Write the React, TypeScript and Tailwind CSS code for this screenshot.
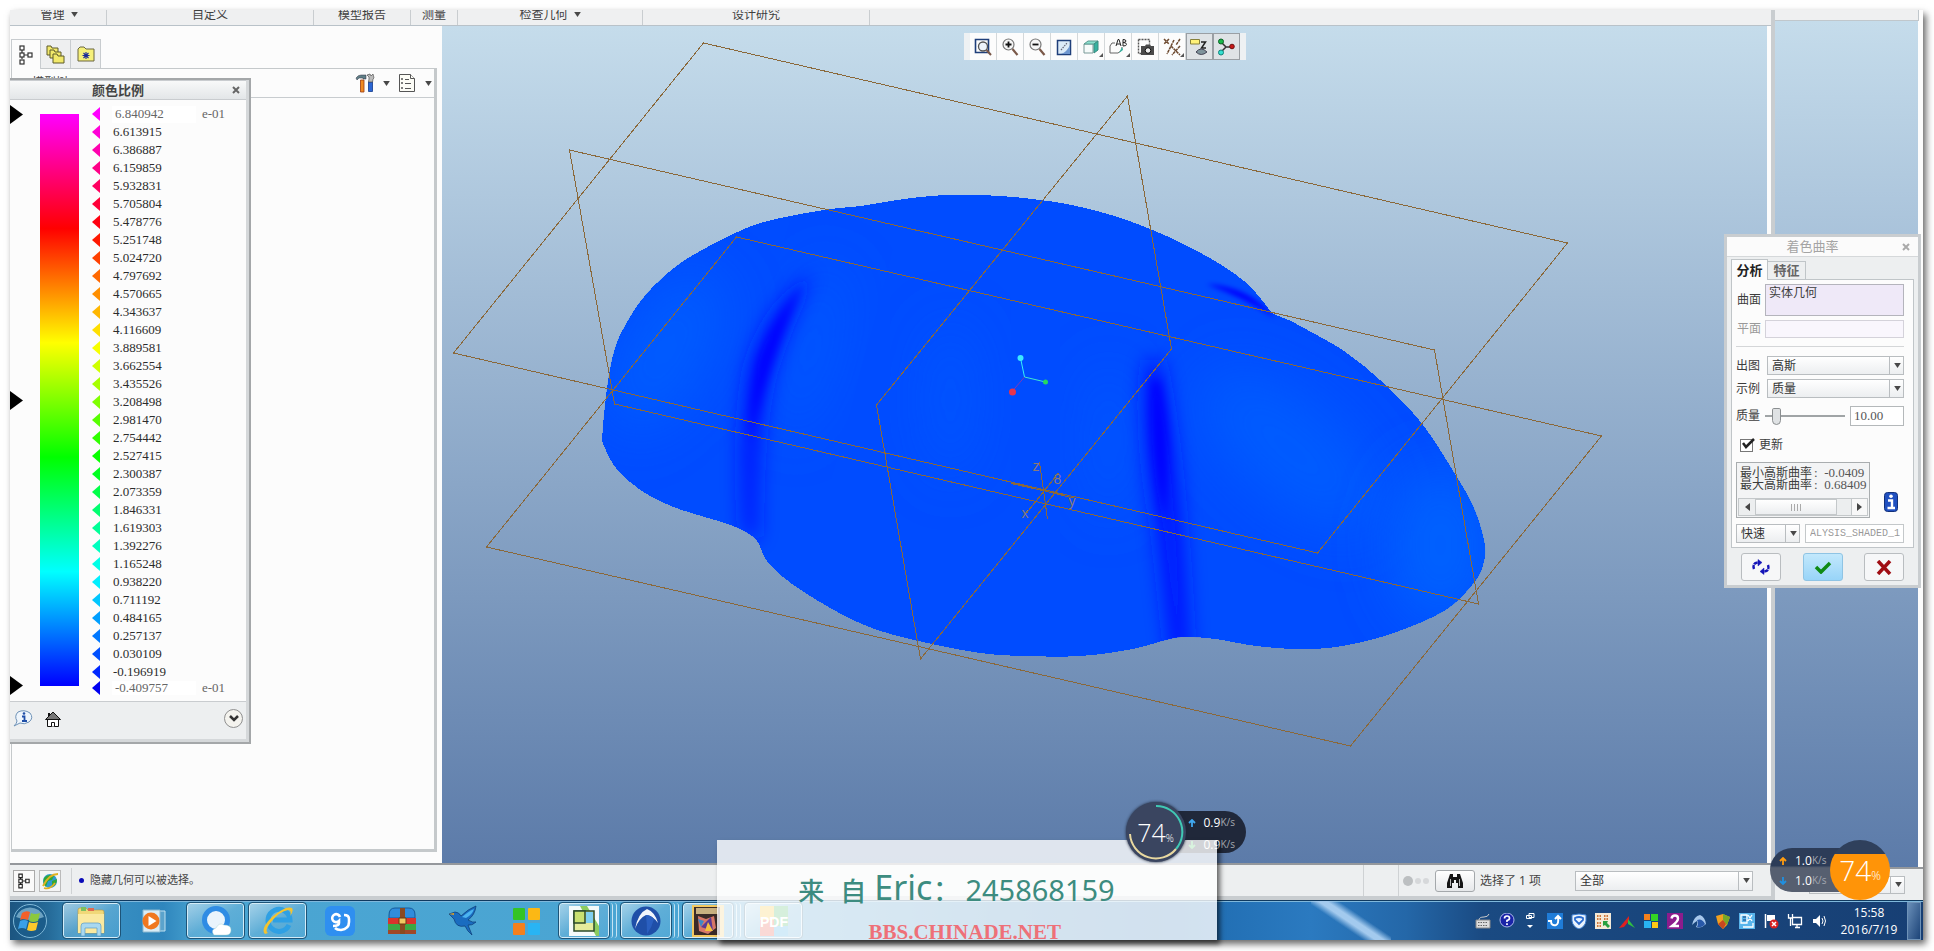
import type { ReactNode } from "react";

const cjk = "font-['Noto_Sans','Noto_Sans_CJK_SC',sans-serif]";
const song = "font-['Liberation_Serif','Noto_Sans_CJK_SC',serif]";

type Pt = [number, number];

/* Closed Catmull-Rom spline through the given points. */
function spline(pts: Pt[]): string {
  const n = pts.length;
  let d = `M${pts[0][0]} ${pts[0][1]}`;
  for (let i = 0; i < n; i++) {
    const p0 = pts[(i - 1 + n) % n];
    const p1 = pts[i];
    const p2 = pts[(i + 1) % n];
    const p3 = pts[(i + 2) % n];
    d += `C${p1[0] + (p2[0] - p0[0]) / 6} ${p1[1] + (p2[1] - p0[1]) / 6} ${p2[0] - (p3[0] - p1[0]) / 6} ${p2[1] - (p3[1] - p1[1]) / 6} ${p2[0]} ${p2[1]}`;
  }
  return d + "Z";
}

const body: Pt[] = [
  [602, 433], [607, 385], [614, 350], [625, 325], [645, 295], [676, 266], [707, 247], [737, 232], [767, 221],
  [823, 210], [860, 206], [897, 200], [930, 196], [960, 195], [1000, 196], [1040, 200], [1071, 205], [1114, 216],
  [1152, 230], [1187, 246], [1221, 265], [1246, 283], [1263, 302], [1272, 313], [1288, 320], [1307, 330],
  [1345, 352], [1383, 383], [1421, 423], [1452, 470], [1473, 507], [1484, 543], [1483, 563], [1474, 582],
  [1445, 610], [1393, 633], [1342, 646], [1300, 649], [1256, 646], [1215, 639], [1187, 637], [1169, 639],
  [1132, 649], [1080, 656], [1024, 656], [980, 653], [927, 643], [877, 630], [837, 612], [793, 585], [767, 562],
  [758, 543], [747, 533], [727, 524], [673, 507], [640, 490], [617, 470], [604, 447],
];

const stops = ["#ff00ff", "#ff0000", "#ffff00", "#00ff00", "#00ffff", "#0000ff"];
const values = [
  "6.613915", "6.386887", "6.159859", "5.932831", "5.705804", "5.478776", "5.251748", "5.024720", "4.797692",
  "4.570665", "4.343637", "4.116609", "3.889581", "3.662554", "3.435526", "3.208498", "2.981470", "2.754442",
  "2.527415", "2.300387", "2.073359", "1.846331", "1.619303", "1.392276", "1.165248", "0.938220", "0.711192",
  "0.484165", "0.257137", "0.030109", "-0.196919",
];

function scaleColor(t: number): string {
  const s = Math.min(t * 5, 4.9999);
  const i = Math.floor(s);
  const f = s - i;
  const ch = (hex: string, k: number) => parseInt(hex.slice(1 + k * 2, 3 + k * 2), 16);
  const mix = [0, 1, 2].map((k) => Math.round(ch(stops[i], k) * (1 - f) + ch(stops[i + 1], k) * f));
  return `rgb(${mix.join(",")})`;
}

function Down({ className = "" }: { className?: string }) {
  return (
    <svg viewBox="0 0 8 6" className={`h-[5px] w-[7px] shrink-0 ${className}`}>
      <path d="M0 0h8L4 6z" fill="#484848" />
    </svg>
  );
}

function Marker({ color }: { color: string }) {
  return (
    <svg viewBox="0 0 8 14" className="h-[14px] w-2 shrink-0">
      <path d="M8 0v14L0 7z" fill={color} />
    </svg>
  );
}

function TreeIcon() {
  return (
    <svg viewBox="0 0 14 20" className="h-5 w-[14px]" fill="#fff" stroke="#333" strokeWidth="1.2">
      <path d="M3 5v9M5 10h4" />
      <rect x="1" y="1" width="4" height="4" />
      <rect x="1" y="8" width="4" height="4" />
      <rect x="1" y="15" width="4" height="4" />
      <rect x="9" y="8" width="4" height="4" />
    </svg>
  );
}

function Ribbon() {
  const cells: [string, string, boolean][] = [
    ["w-[95px]", "管理", true],
    ["w-[207px]", "自定义", false],
    ["w-[97px]", "模型报告", false],
    ["w-[47px]", "测量", false],
    ["w-[185px]", "检查几何", true],
    ["w-[227px]", "设计研究", false],
  ];
  return (
    <nav className="flex h-4 shrink-0 items-stretch overflow-hidden border-b border-[#b9c2c9] bg-[#eff0f1] pl-[2px] text-xs text-[#3f3f3f]">
      {cells.map(([w, label, menu]) => (
        <button key={label} className={`flex ${w} shrink-0 items-center justify-center gap-[6px] border-r border-[#c9cdd0] pb-[6px] leading-none`}>
          {label}
          {menu && <Down />}
        </button>
      ))}
    </nav>
  );
}

function ModelTreePanel() {
  return (
    <aside className="flex w-[432px] shrink-0 flex-col bg-[#fcfcfc] pt-[13px] pr-[5px] pb-[11px] pl-[1px]">
      <div className="flex">
        <button aria-label="模型树" className="z-10 -mb-[1px] flex h-[30px] w-[30px] items-center justify-center border border-b-0 border-[#c8cccf] bg-[#fcfcfc]">
          <TreeIcon />
        </button>
        <button aria-label="文件夹" className="flex h-[29px] w-[30px] items-center justify-center border-t border-r border-[#c8cccf] bg-[#eeeff0]">
          <svg viewBox="0 0 20 20" className="h-5 w-5" stroke="#5d5a2a" fill="#f2e96b">
            <path d="M1 2h4l1 2h6v7H1z" />
            <path d="M4 6h4l1 2h6v6H4z" />
            <path d="M7 10h4l1 2h6v7H7z" />
          </svg>
        </button>
        <button aria-label="收藏夹" className="flex h-[29px] w-[30px] items-center justify-center border-t border-r border-[#c8cccf] bg-[#eeeff0]">
          <svg viewBox="0 0 18 16" className="h-4 w-[18px]">
            <path d="M1 15V3l2-2h4l2 2h8v12z" fill="#f6f07a" stroke="#6a6740" />
            <path d="M9 6v7M5.500 9.500h7M6.500 7l5 5M11.500 7l-5 5" stroke="#1a2a9a" strokeWidth="1.100" />
          </svg>
        </button>
      </div>
      <div className="flex flex-1 flex-col border-t border-r-3 border-b-3 border-l border-[#c5c9cb]">
        <div className="flex h-[29px] items-center border-b border-[#c8cccf] pr-[2px]">
          <span className="flex-1 pl-5 text-xs text-[#444]">模型树</span>
          <button aria-label="设置" className="flex items-center gap-2">
            <svg viewBox="0 0 20 20" className="h-5 w-5">
              <path d="M1 5q2-3 5-3h5v4H8v-1H4l-2 2z" fill="#5f7f86" stroke="#334" strokeWidth=".5" />
              <path d="M5.500 7h3.500v12H5.500z" fill="#f08a20" stroke="#9a3a10" strokeWidth=".8" />
              <path d="M13.500 9h4v9.500h-4z" fill="#2c66d4" stroke="#123a8a" strokeWidth=".8" />
              <path d="M12 2l2 2v2l-.5 3h4l.5-3 1-1-1-4-2 2-1-2z" fill="#bbb" stroke="#555" strokeWidth=".7" />
            </svg>
            <Down />
          </button>
          <button aria-label="显示" className="ml-2 flex items-center gap-[9px]">
            <svg viewBox="0 0 18 20" className="h-5 w-[18px]" fill="#fcfcf6" stroke="#555">
              <path d="M1.500 1.500h11l4 4v13h-15z" />
              <path d="M12.500 1.500v4h4" />
              <path d="M7 6.500h4M7 10.500h6M7 15.500h6M3.500 5.500h1v1h-1zM3.500 9.500h1v1h-1zM3.500 14.500h1v1h-1z" />
            </svg>
            <Down />
          </button>
        </div>
      </div>
    </aside>
  );
}

function ToolButton({ label, active, children, more }: { label: string; active?: boolean; children: ReactNode; more?: boolean }) {
  const look = active ? "border border-[#9a9fa4] bg-[#dfe3e6]" : "border-r border-[#d4d8da] bg-[#fcfcfc]";
  return (
    <button aria-label={label} className={`relative flex h-[27px] w-[27px] items-center justify-center ${look}`}>
      <svg viewBox="0 0 18 18" className="h-[18px] w-[18px]" fill="none">
        {children}
      </svg>
      {more && (
        <svg viewBox="0 0 4 4" className="absolute right-[1px] bottom-[3px] h-1 w-1">
          <path d="M4 0v4H0z" fill="#555" />
        </svg>
      )}
    </button>
  );
}

function ViewToolbar() {
  return (
    <div className="absolute inset-x-0 top-[7px] flex justify-center">
      <div className="flex bg-[#eef1f3] px-[6px]">
        <ToolButton label="重新调整">
          <path d="M1.500 1.500h13v13h-13z" stroke="#1f3f7a" strokeWidth="1.600" />
          <circle cx="9" cy="8.500" r="4.500" fill="#eef4fb" stroke="#555" strokeWidth="1.300" />
          <path d="M12.500 12l4.500 5" stroke="#7a5848" strokeWidth="2" />
        </ToolButton>
        <ToolButton label="放大">
          <circle cx="7.500" cy="6.500" r="5.500" fill="#f6f6f6" stroke="#777" strokeWidth="1.200" />
          <path d="M4.500 6.500h6M7.500 3.500v6" stroke="#111" strokeWidth="1.800" />
          <path d="M11.500 11l5 6" stroke="#7a5848" strokeWidth="2.200" />
        </ToolButton>
        <ToolButton label="缩小">
          <circle cx="7.500" cy="6.500" r="5.500" fill="#f6f6f6" stroke="#777" strokeWidth="1.200" />
          <path d="M4.500 6.500h6" stroke="#111" strokeWidth="1.800" />
          <path d="M11.500 11l5 6" stroke="#7a5848" strokeWidth="2.200" />
        </ToolButton>
        <ToolButton label="重画">
          <path d="M2.500 2.500h13v14h-13z" fill="#dcebf8" stroke="#1f3f7a" strokeWidth="1.500" />
          <path d="M15 7v9H6q6-2 9-9z" fill="#6f97cf" />
          <path d="M6 12l6-7" stroke="#667" strokeWidth="1.200" strokeDasharray="1.500 1" />
        </ToolButton>
        <ToolButton label="显示样式" more>
          <path d="M2 6h9v9H2z" fill="#f6fbfa" stroke="#7b9a98" />
          <path d="M2 6l4-3h10l-4 3z" fill="#8be0cf" stroke="#5b9a90" />
          <path d="M12 6l4-3v9l-4 3z" fill="#35b3a0" stroke="#3b8a80" />
        </ToolButton>
        <ToolButton label="已保存方向" more>
          <path d="M6 5H3L1 8v7h8l4-3V9" stroke="#666" />
          <path d="M13 9l-3 6 4-3z" fill="#35b3a0" />
          <path d="M7 8l2-6.500h1L12 8M8 6h3M14 1.500V8M14 1.500q3 0 3 1.500t-3 1.500q3.500 0 3.500 1.800T14 8" stroke="#222" />
        </ToolButton>
        <ToolButton label="视图管理器">
          <path d="M2.500 1.500h11v5M2.500 1.500v14h3" stroke="#555" strokeDasharray="2 1" strokeWidth="1.400" />
          <path d="M5 8h4l1-1.500h4L15 8h3v9H5z" fill="#4a4a4a" />
          <circle cx="12" cy="12.500" r="2.800" fill="#eee" stroke="#111" />
        </ToolButton>
        <ToolButton label="基准显示过滤器" more>
          <path d="M1 1l5 5M6 1L1 6M11 2l-7 14M17 1l-4 6M8 8l9 9M17 8l-8 9" stroke="#6d4a30" strokeWidth="1.500" strokeDasharray="3 .7" />
        </ToolButton>
        <ToolButton label="注释显示" active>
          <path d="M.5 1.500h9v4.500h-9z" fill="#fff27a" stroke="#86803a" />
          <path d="M11 4h4.500l-4 6H16" stroke="#222" strokeWidth="1.500" />
          <path d="M6 14q5-6 11 0-6 5-11 0z" fill="#7f949c" stroke="#445" />
        </ToolButton>
        <ToolButton label="旋转中心" active>
          <path d="M4 4l5 5 7 0M9 9l-5 5" stroke="#333" strokeWidth="1.500" />
          <circle cx="4" cy="3.500" r="2.500" fill="#18b848" stroke="#0a6025" />
          <circle cx="15" cy="8.500" r="2.300" fill="#c81818" stroke="#701010" />
          <circle cx="4" cy="14.500" r="2.500" fill="#35e0d0" stroke="#108078" />
        </ToolButton>
      </div>
    </div>
  );
}

function ModelDrawing() {
  const outline = spline(body);
  return (
    <svg viewBox="442 26 1324 837" className="absolute inset-0 h-full w-full">
      <defs>
        <clipPath id="body"><path d={outline} /></clipPath>
        <filter id="b30" x="-100%" y="-100%" width="300%" height="300%"><feGaussianBlur stdDeviation="28" /></filter>
        <filter id="b9" x="-100%" y="-50%" width="300%" height="200%"><feGaussianBlur stdDeviation="10" /></filter>
        <filter id="b5" x="-100%" y="-50%" width="300%" height="200%"><feGaussianBlur stdDeviation="5" /></filter>
        <filter id="b2" x="-50%" y="-100%" width="200%" height="300%"><feGaussianBlur stdDeviation="2.500" /></filter>
      </defs>
      <path d={outline} fill="#004cff" shapeRendering="crispEdges" />
      <g clipPath="url(#body)">
        <ellipse cx="665" cy="350" rx="45" ry="90" fill="#005cff" filter="url(#b30)" transform="rotate(30 665 350)" />
        <ellipse cx="810" cy="350" rx="18" ry="90" fill="#005aff" filter="url(#b30)" transform="rotate(15 810 350)" />
        <ellipse cx="950" cy="400" rx="20" ry="80" fill="#0056ff" filter="url(#b30)" />
        <ellipse cx="1108" cy="440" rx="16" ry="80" fill="#0059ff" filter="url(#b30)" />
        <ellipse cx="1290" cy="450" rx="110" ry="50" fill="#005cff" filter="url(#b30)" transform="rotate(40 1290 450)" />
        <ellipse cx="1440" cy="545" rx="50" ry="80" fill="#0062ff" filter="url(#b30)" />
        <path d="M812 272Q762 312 748 370Q737 430 743 535L757 540Q756 430 770 375Q785 325 812 272Z" fill="#0018ff" filter="url(#b9)" />
        <path d="M804 282Q770 322 757 362Q749 400 750 440Q768 355 804 282Z" fill="#0000ff" filter="url(#b5)" />
        <path d="M1146 360Q1138 430 1156 530L1170 660L1190 660Q1180 450 1160 360Z" fill="#0014ff" filter="url(#b9)" />
        <path d="M1151 380Q1148 440 1163 520Q1172 440 1159 380Z" fill="#0000ff" filter="url(#b5)" />
        <path d="M1206 284Q1248 286 1275 318Q1246 299 1206 284Z" fill="#0000ff" filter="url(#b2)" />
      </g>
      <g fill="none" stroke="#8a683a" shapeRendering="crispEdges">
        <path d="M703 43L1567 243L1317 553L453 353Z" />
        <path d="M736 237L1601 436L1350 746L486 547Z" />
        <path d="M569 150L1434 350L1478 604L614 404Z" />
        <path d="M1127 96L1171 349L920 659L876 405Z" />
        <path d="M1039 462L1047 519M1026 513L1058 473M1011 483L1073 498M1013 484L1062 495" />
      </g>
      <g fill="#8a7a78" className="font-['Liberation_Sans',sans-serif] text-[14px]">
        <text x="1032" y="471">z</text>
        <text x="1021" y="518">x</text>
        <text x="1068" y="506">y</text>
        <text x="1053" y="484">8</text>
      </g>
      <path d="M1020 358l4 19" stroke="#35f0f8" />
      <path d="M1024 377l21 5" stroke="#40e8d0" />
      <path d="M1024 377l-12 14" stroke="#7a3ab8" />
      <circle cx="1020" cy="358" r="3" fill="#3ce8ff" />
      <circle cx="1045" cy="382" r="2.500" fill="#25d860" />
      <circle cx="1012" cy="392" r="3.500" fill="#e8344c" />
    </svg>
  );
}

function StatusSelect({ label, value, className = "" }: { label: string; value: string; className?: string }) {
  return (
    <div className={`relative flex ${className}`}>
      <select aria-label={label} className="h-full w-full appearance-none border border-[#b9bdc0] bg-linear-to-b from-white to-[#eceef0] pl-1 text-xs text-[#333]">
        <option>{value}</option>
      </select>
      <span className="pointer-events-none absolute inset-y-0 right-0 flex w-[15px] items-center justify-center border-l border-[#b9bdc0]">
        <Down />
      </span>
    </div>
  );
}

function StatusBar() {
  return (
    <footer className="flex h-[37px] shrink-0 items-center border-t-2 border-b-4 border-t-[#95989c] border-b-[#c9cdd0] bg-[#edeff0] pl-[3px] text-[#444]">
      <button aria-label="导航器" className="flex h-[22px] w-[22px] items-center justify-center border border-[#aaa] bg-[#fafafa]">
        <svg viewBox="0 0 14 18" className="h-4 w-3" fill="#fff" stroke="#222" strokeWidth="1.300">
          <path d="M3 4v10M5 9h4" />
          <path d="M1 1h4v4H1zM1 7h4v4H1zM1 13h4v4H1zM9 7h4v4H9z" />
        </svg>
      </button>
      <button aria-label="浏览器" className="ml-1 flex h-[22px] w-[22px] items-center justify-center border border-[#bbb] bg-[#f4f4f4]">
        <svg viewBox="0 0 18 18" className="h-[18px] w-[18px]">
          <circle cx="9" cy="9" r="7" fill="#2f9ad0" />
          <path d="M3 6q4-5 10-2l-2 4-4 1-2 6q-4-4-2-9zM11 9l5-2q0 6-5 8z" fill="#2fa83a" />
          <path d="M2 14Q8 2 17 2M3 16q6 2 11-5" stroke="#e0b020" strokeWidth="1.800" fill="none" />
        </svg>
      </button>
      <div className="ml-[10px] flex h-[26px] flex-1 items-center gap-[6px] border-l border-[#cfd2d4] pl-[7px]">
        <span className="h-[5px] w-[5px] rounded-full bg-[#0a0ab8]" />
        <span className="text-[11px]">隐藏几何可以被选择。</span>
      </div>
      <div className="flex h-full w-9 items-center border-x border-[#cfd2d4]" />
      <div className="flex w-9 items-center gap-[2px] pl-1">
        <span className="h-[10px] w-[10px] rounded-full bg-[#bcbfc1]" />
        <span className="h-[6px] w-[6px] rounded-full bg-[#d6d8da]" />
        <span className="h-[6px] w-[6px] rounded-full bg-[#d6d8da]" />
      </div>
      <button aria-label="查找" className="flex h-[22px] w-10 items-center justify-center rounded-[3px] border border-[#a4a8ab] bg-linear-to-b from-white to-[#e6e8ea]">
        <svg viewBox="0 0 16 16" className="h-4 w-4">
          <path d="M3 1h3v3h4V1h3l3 9v5h-5v-5H9v-3H7v3H5v5H0v-5z" fill="#161616" />
          <path d="M3.500 6v7M12.500 6v7" stroke="#bbb" />
        </svg>
      </button>
      <span className="ml-[5px] w-[95px] text-xs whitespace-pre">选择了 1 项</span>
      <StatusSelect label="选择过滤器" value="全部" className="mr-[18px] h-5 w-[178px]" />
    </footer>
  );
}

function ColorScale() {
  return (
    <section className="absolute top-[68px] left-0 flex w-[241px] flex-col border-t-2 border-r-2 border-b-2 border-[#a4a7a9] bg-[#fcfcfc] shadow-[inset_-3px_0_0_#d5d8da]">
      <header className="mr-[3px] flex h-5 items-center border-t border-b border-[#c9cccf] bg-linear-to-b from-[#f8f9f9] to-[#e3e6e8] pr-1">
        <h2 className="flex-1 pr-1 text-center text-[13px] leading-none font-bold text-[#444]">颜色比例</h2>
        <button aria-label="关闭颜色比例" className="flex h-4 w-3 items-center justify-center">
          <svg viewBox="0 0 8 8" className="h-2 w-2"><path d="M1 1l6 6M7 1L1 7" stroke="#666" strokeWidth="2" /></svg>
        </button>
      </header>
      <div className={`flex pt-[5px] pb-[6px] text-[13px] text-[#2c2c2c] ${song}`}>
        <div className="flex w-[13px] flex-col justify-between">
          {["上限", "中值", "下限"].map((n) => (
            <button key={n} aria-label={n} className="h-[19px] w-[13px]">
              <svg viewBox="0 0 13 19" className="h-[19px] w-[13px]"><path d="M0 0v19l13-9.500z" fill="#000" /></svg>
            </button>
          ))}
        </div>
        <div className="my-[9px] ml-[17px] w-[39px] bg-[linear-gradient(#f0f,#f00_20%,#ff0_40%,#0f0_60%,#0ff_80%,#00f)]" />
        <ul className="ml-[13px] flex-1">
          <li className="flex h-[18px] items-center">
            <Marker color="#ff00ff" />
            <input aria-label="最大值" defaultValue="6.840942" className="ml-3 h-[17px] w-[84px] bg-white pl-[3px] text-[#666]" />
            <span className="ml-[6px] text-[#666]">e-01</span>
          </li>
          {values.map((v, i) => (
            <li key={v} className="flex h-[18px] items-center gap-[13px]">
              <Marker color={scaleColor((i + 1) / 32)} />
              {v}
            </li>
          ))}
          <li className="flex h-[14px] items-center">
            <Marker color="#0000f0" />
            <input aria-label="最小值" defaultValue="-0.409757" className="ml-3 h-[14px] w-[84px] bg-white pl-[3px] leading-none text-[#666]" />
            <span className="ml-[6px] text-[#666]">e-01</span>
          </li>
        </ul>
      </div>
      <footer className="mr-[3px] flex h-[38px] items-center border-t border-[#c9cccf] bg-[#edeff0] pr-[3px] pb-1 pl-[3px]">
        <button aria-label="信息">
          <svg viewBox="0 0 20 18" className="h-[18px] w-5">
            <path d="M5 2q6-3 12 1 4 5-1 9-5 3-9 1L1 16q3-3 3-5-3-5 1-9z" fill="#eef5fc" stroke="#6f93b8" />
            <path d="M9 6.500h2.500V11M9 11h5" stroke="#1f4fa8" strokeWidth="1.800" fill="none" />
            <circle cx="11" cy="3.500" r="1.300" fill="#1f4fa8" />
          </svg>
        </button>
        <button aria-label="主页" className="ml-3">
          <svg viewBox="0 0 16 16" className="h-4 w-4">
            <path d="M2.500 8v7.500h11V8" fill="#fff" stroke="#111" />
            <path d="M.5 8.500L8 1l7.500 7.500z" fill="#777" stroke="#111" />
            <path d="M3 2h2v3H3z" fill="#111" />
            <path d="M6.500 15.500v-4h3v4" fill="#fff" stroke="#111" />
          </svg>
        </button>
        <button aria-label="展开" className="ml-auto flex h-[19px] w-[19px] items-center justify-center rounded-full border border-[#8f8f8f] bg-[#f4f3ee]">
          <svg viewBox="0 0 10 8" className="h-2 w-[10px]"><path d="M1 1l4 4 4-4" stroke="#333" strokeWidth="2.500" fill="none" /></svg>
        </button>
      </footer>
      <div className="h-[3px] bg-[#d5d8da]" />
    </section>
  );
}

function CurvatureDialog() {
  return (
    <section className="absolute top-[224px] right-[2px] flex w-[197px] flex-col border-3 border-[#c9cdd0] bg-[#edeff0] px-1 text-xs text-[#3c3c3c]">
      <header className="-mx-1 flex h-5 items-center border-b border-[#d5d8da] bg-[#fbfbfb] pr-2">
        <h2 className="flex-1 pr-1 text-center text-[13px] leading-none text-[#a4a4a4]">着色曲率</h2>
        <button aria-label="关闭着色曲率">
          <svg viewBox="0 0 8 8" className="h-2 w-2"><path d="M1 1l6 6M7 1L1 7" stroke="#aaa" strokeWidth="2" /></svg>
        </button>
      </header>
      <div className="mt-[2px] flex items-end text-[13px] leading-none font-bold">
        <button className="z-10 -mb-[1px] h-[21px] w-[37px] border border-b-0 border-[#c0c5c8] bg-[#fcfcfc] text-[#222]">分析</button>
        <button className="h-[18px] w-[38px] border border-b-0 border-l-0 border-[#c0c5c8] text-[#666]">特征</button>
      </div>
      <div className="flex flex-col border border-[#c0c5c8] bg-[#fcfcfc] pt-1 pr-[9px] pb-1 pl-1">
        <div className="flex items-center">
          <label htmlFor="surface" className="w-[29px] pl-[1px]">曲面</label>
          <textarea id="surface" defaultValue="实体几何" className="h-8 flex-1 resize-none overflow-hidden border border-[#b4b4bc] bg-[#efe9f8] px-[3px] leading-4" />
        </div>
        <div className="mt-1 flex items-center">
          <label htmlFor="plane" className="w-[29px] pl-[1px] text-[#999]">平面</label>
          <input id="plane" disabled className="h-[18px] min-w-0 flex-1 border border-[#d4d2da] bg-[#f9f6fd]" />
        </div>
        <div className="mt-2 mb-[9px] h-px bg-[#d4d6d8]" />
        <div className="flex items-center">
          <span className="w-[31px]">出图</span>
          <StatusSelect label="出图" value="高斯" className="h-[19px] flex-1" />
        </div>
        <div className="mt-1 flex items-center">
          <span className="w-[31px]">示例</span>
          <StatusSelect label="示例" value="质量" className="h-[19px] flex-1" />
        </div>
        <div className="mt-2 flex items-center">
          <label htmlFor="quality" className="w-[29px]">质量</label>
          <input
            id="quality"
            type="range"
            min="0"
            max="100"
            defaultValue="10"
            className="h-[18px] w-20 appearance-none bg-[linear-gradient(#a0a4a6,#a0a4a6)] bg-size-[100%_2px] bg-center bg-no-repeat [&::-webkit-slider-thumb]:h-[17px] [&::-webkit-slider-thumb]:w-[9px] [&::-webkit-slider-thumb]:appearance-none [&::-webkit-slider-thumb]:rounded-t-[2px] [&::-webkit-slider-thumb]:rounded-b-[5px] [&::-webkit-slider-thumb]:border [&::-webkit-slider-thumb]:border-[#8a8e90] [&::-webkit-slider-thumb]:bg-[#dfe2e4]"
          />
          <input aria-label="质量值" defaultValue="10.00" className={`ml-auto h-5 w-[54px] border border-[#b4b8ba] bg-white pl-[3px] text-[13px] text-[#555] ${song}`} />
        </div>
        <div className="mt-[11px] flex h-4 items-center pl-1">
          <span className="relative flex">
            <input id="update" type="checkbox" defaultChecked className="h-[13px] w-[13px] appearance-none border border-[#777] bg-white" />
            <svg viewBox="0 0 14 12" className="pointer-events-none absolute -top-[1px] left-[1px] h-3 w-[14px]"><path d="M2 5l3 4 8-8" stroke="#222" strokeWidth="2.500" fill="none" /></svg>
          </span>
          <label htmlFor="update" className="pl-[6px]">更新</label>
        </div>
        <div className="mt-[9px] flex items-end">
          <div className="w-[134px] border border-[#a9adaf] bg-[#f3f4f5]">
            <div className={`overflow-hidden pt-1 pl-[3px] leading-3 whitespace-nowrap ${cjk}`}>
              <div className="flex h-3">最小高斯曲率<span className={`pl-[2px] text-[13px] text-[#555] ${song}`}>:&nbsp; -0.0409</span></div>
              <div className="flex h-3">最大高斯曲率<span className={`pl-[2px] text-[13px] text-[#555] ${song}`}>:&nbsp; 0.68409</span></div>
            </div>
            <div className="mx-[1px] mt-[7px] mb-[1px] flex h-[18px] border border-[#c4c8ca] bg-[#eceeef]">
              <button aria-label="向左" className="flex w-4 items-center justify-center"><svg viewBox="0 0 5 8" className="h-2 w-[5px]"><path d="M5 0v8L0 4z" fill="#444" /></svg></button>
              <div className="flex w-[82px] items-center justify-center gap-[2px] border border-[#c4c8ca] bg-linear-to-b from-white to-[#eceef0]">
                {[0, 1, 2, 3].map((i) => <span key={i} className="h-[7px] w-px bg-[#aaa]" />)}
              </div>
              <button aria-label="向右" className="ml-auto flex w-4 items-center justify-center border-l border-[#c4c8ca] bg-[#f8f8f8]"><svg viewBox="0 0 5 8" className="h-2 w-[5px]"><path d="M0 0v8l5-4z" fill="#444" /></svg></button>
            </div>
          </div>
          <button aria-label="详细信息" className="mb-[6px] ml-[14px]">
            <svg viewBox="0 0 14 20" className="h-5 w-[14px]">
              <rect x=".5" y=".5" width="13" height="19" rx="3" fill="#2050c0" stroke="#12307a" />
              <path d="M4 8.500h4V16M3.500 16h7.500" stroke="#fff" strokeWidth="2.400" fill="none" />
              <circle cx="7" cy="4.200" r="1.800" fill="#fff" />
            </svg>
          </button>
        </div>
        <div className="mt-[6px] flex">
          <StatusSelect label="分析类型" value="快速" className="h-[19px] w-16" />
          <input aria-label="分析名称" defaultValue="ALYSIS_SHADED_1" className="ml-auto h-[19px] w-[99px] min-w-0 border border-[#c4c8ca] bg-white pl-1 font-['Liberation_Mono',monospace] text-[10px] text-[#999]" />
        </div>
      </div>
      <div className="flex justify-between px-[10px] pt-[5px] pb-1">
        <button aria-label="重复" className="flex h-7 w-10 items-center justify-center rounded-[3px] border border-[#b9bdc0] bg-[#f6f7f8]">
          <svg viewBox="0 0 20 16" className="h-4 w-5" fill="none" stroke="#1414b8" strokeWidth="2.400">
            <path d="M3 10q-2-6 4-6.500" strokeDasharray="4 .8" />
            <path d="M17 6q2 6-4 6.500" strokeDasharray="4 .8" />
            <path d="M7 .5l4 3-4 3.500zM13 9l-4 3.500 4 3z" fill="#1414b8" strokeWidth=".5" />
          </svg>
        </button>
        <button aria-label="确定" className="flex h-7 w-10 items-center justify-center rounded-[3px] border border-[#8fc4e4] bg-linear-to-b from-[#c2e8fc] to-[#98d4f8]">
          <svg viewBox="0 0 18 13" className="h-[13px] w-[18px]"><path d="M2 6l5 5L16 2" stroke="#0f8a14" strokeWidth="3.500" fill="none" /></svg>
        </button>
        <button aria-label="取消" className="flex h-7 w-10 items-center justify-center rounded-[3px] border border-[#b9bdc0] bg-[#f6f7f8]">
          <svg viewBox="0 0 16 15" className="h-[15px] w-4"><path d="M2 1l12 13M14 1L2 14" stroke="#a00e14" strokeWidth="3.500" /></svg>
        </button>
      </div>
    </section>
  );
}

function TaskButton({ label, framed, stacked, children }: { label: string; framed?: boolean; stacked?: boolean; children: ReactNode }) {
  const frame = framed
    ? "rounded-[3px] border border-[#d3ecf8] bg-linear-to-br from-[#b9dcee]/80 via-[#6cb4da]/60 to-[#58acd8]/50 outline outline-[#1d5478]"
    : "";
  return (
    <div className="flex w-[62px] shrink-0 items-stretch py-[2px] pl-[3px]">
      <button aria-label={label} className={`flex items-center justify-center ${stacked ? "w-[50px]" : "w-[57px]"} ${frame}`}>
        <svg viewBox="0 0 32 32" className="h-8 w-8">{children}</svg>
      </button>
      {stacked && <span className="w-1 rounded-r-[3px] border-r border-[#c5e4f4]" />}
      {stacked && <span className="w-1 rounded-r-[3px] border-r border-[#c5e4f4]" />}
    </div>
  );
}

function Tray({ label, children }: { label: string; children: ReactNode }) {
  return (
    <button aria-label={label} className="flex w-6 items-center justify-center">
      <svg viewBox="0 0 16 16" className="h-4 w-4">{children}</svg>
    </button>
  );
}

function Taskbar() {
  return (
    <footer className="relative flex h-10 shrink-0 items-stretch border-t border-[#103a60] bg-[linear-gradient(90deg,#1c5580_0,#256a98_2%,#3c93c4_4%,#2f86bd_8%,#4aa5d2_10%,#4ba5d3_35%,#2878b4_52%,#1c68ac_60%,#2b7ac0_68%,#2467a8_73%,#1a4a82_77%,#173f74_100%)] shadow-[inset_0_1px_0_#7fb8dc]">
      <span className="pointer-events-none absolute inset-y-0 left-[68%] w-20 bg-[linear-gradient(34deg,transparent_38%,#a3caee_47%,#a3caee_53%,transparent_62%)]" />
      <button aria-label="开始" className="flex w-[50px] shrink-0 items-center pl-[2px]">
        <svg viewBox="0 0 36 36" className="h-9 w-9">
          <circle cx="18" cy="18" r="16.500" fill="#1b5c8a" stroke="#7fb8d8" />
          <path d="M4 14a15 15 0 0 1 28 0q-14 6-28 0z" fill="#8fc0da" opacity=".7" />
          <path d="M10 10q4-3 8-1l-2 8q-4-2-8 0z" fill="#f2602a" />
          <path d="M19 10q4 2 9 0l-2 8q-5 2-9 0z" fill="#8cc83c" />
          <path d="M8 18q4-2 8 0l-2 8q-4-2-8 0z" fill="#3aa0e8" />
          <path d="M17 19q4 2 9 0l-2 8q-5 2-9 0z" fill="#fcc82c" />
        </svg>
      </button>
      <TaskButton label="资源管理器" framed>
        <path d="M2 5q0-2 2-2h6l2 2h14q2 0 2 2v21H2z" fill="#f0d878" stroke="#b8963c" strokeWidth=".6" />
        <path d="M5 2h5v4H5z" fill="#7cc060" /><path d="M12 3h6v3h-6z" fill="#e06a50" />
        <path d="M2 9h26v19H2z" fill="#fae9a0" />
        <path d="M5 31V21q0-3 3-3h14q3 0 3 3v10h-4v-8H9v8z" fill="#a8d8f0" stroke="#5a9cc4" strokeWidth=".7" />
      </TaskButton>
      <TaskButton label="媒体播放器">
        <path d="M14 6h13v20H14z" fill="#5ba3cc" stroke="#bfe0f0" /><path d="M5 5h17v22H5z" fill="#d9ecf6" stroke="#8ab8d0" />
        <circle cx="13" cy="16" r="8.500" fill="#f07820" /><path d="M10.500 11l8 5-8 5z" fill="#fff" />
      </TaskButton>
      <TaskButton label="浏览器" framed>
        <circle cx="16" cy="15" r="11.500" fill="#eaf4fc" stroke="#2f8ce4" strokeWidth="5" />
        <path d="M14 30q-4-5 2-7 3-6 8-3 7 0 7 5t-5 5z" fill="#fff" stroke="#9cc" strokeWidth=".4" />
      </TaskButton>
      <TaskButton label="Internet Explorer" framed>
        <path d="M27 20a11 11 0 1 1 1-5H11" fill="none" stroke="#2fa0e4" strokeWidth="5" />
        <path d="M3 29Q-2 24 10 12 24 0 30 3q2 3-2 8 2-6-2-6Q18 6 9 17 2 26 6 28z" fill="#f4c430" />
      </TaskButton>
      <TaskButton label="快传">
        <rect x="1" y="1" width="30" height="30" rx="6" fill="#2f8ff0" />
        <path d="M16 12a4 4 0 1 0-1 4v2q0 3-6 3M20 10q5 0 5 4v3q0 7-8 8-4 0-6-2" fill="none" stroke="#fff" strokeWidth="2.600" />
      </TaskButton>
      <TaskButton label="压缩软件">
        <path d="M3 10q0-7 6-7h14q6 0 6 7v3H3z" fill="#2f8cdc" stroke="#175a9a" />
        <path d="M2 13h28v6H2z" fill="#d8342c" /><path d="M2 19h28v6H2z" fill="#3ca844" /><path d="M2 25h28v4H2z" fill="#a04828" />
        <path d="M14 3h5v26h-5z" fill="#8a4a20" /><path d="M13 13h7v6h-7z" fill="#f0c860" stroke="#6a3a10" />
      </TaskButton>
      <TaskButton label="蜂鸟">
        <path d="M1 9l6-2q4 0 6 4Q20 4 28 1q-1 9-8 14 5 3 8 2-4 4-8 3l4 10q-5-4-7-9-9 2-11-7z" fill="#1a6cc0" stroke="#0c3a74" strokeWidth=".7" />
        <path d="M14 12Q21 6 26 4q-2 6-8 9z" fill="#4cb4f0" /><path d="M1 9l5-1v2z" fill="#e0a020" />
      </TaskButton>
      <TaskButton label="应用商店">
        <rect x="3" y="3" width="12" height="12" rx="1" fill="#34c424" /><rect x="18" y="3" width="12" height="12" rx="1" fill="#fcb814" />
        <rect x="3" y="18" width="12" height="12" rx="1" fill="#f4801c" /><rect x="18" y="18" width="12" height="12" rx="1" fill="#28b4f4" />
      </TaskButton>
      <TaskButton label="绘图软件" framed stacked>
        <path d="M1 1h30v30H1z" fill="#f4fafa" /><path d="M12 1h7l12 20v10h-3z" fill="#8ccc60" />
        <path d="M6 6h20v20H6z" fill="#e4ec9c" stroke="#2a4a2a" strokeWidth="1.500" />
        <path d="M6 6h11v12H6z" fill="#c8e070" stroke="#2a4a2a" strokeWidth="1.500" /><path d="M18 7h7v11h-7z" fill="#7fd0f0" />
      </TaskButton>
      <TaskButton label="Creo" framed stacked>
        <circle cx="16" cy="16" r="14.500" fill="#1f4fa8" />
        <path d="M5 24Q8 8 17 4q8 3 11 14-6-8-12-8Q9 13 5 24z" fill="#f0f5fb" /><path d="M16 10q5 0 8 4-2 8-7 15 0-11-1-19z" fill="#2a5fc0" />
      </TaskButton>
      <TaskButton label="海贼" framed stacked>
        <path d="M0 0h32v32H0z" fill="#f2c860" /><path d="M2 2h26v28H2z" fill="#3a2a28" />
        <path d="M4 3h22v6H4z" fill="#c8b080" /><path d="M6 11l8 3 8-3 2 12-8 6-9-3z" fill="#d87868" />
        <path d="M9 22l10-10 2 14z" fill="#5a3a94" /><path d="M6 14l6 2-3 6z" fill="#3c88c8" /><path d="M16 17l5 9h-8z" fill="#f4c03c" />
      </TaskButton>
      <TaskButton label="PDF" framed>
        <path d="M2 1h14v14H2z" fill="#f4c020" /><path d="M16 1h14v20H16z" fill="#30b050" /><path d="M2 15h14v16H2z" fill="#e84030" /><path d="M16 21h14v10H16z" fill="#28a0e0" />
        <text x="2" y="22" fill="#fff" className="font-['Liberation_Sans',sans-serif] text-[14px] font-bold">PDF</text>
      </TaskButton>
      <div className="ml-auto flex items-center">
        <Tray label="键盘"><path d="M1 7h14v8H1z" fill="#ddd" stroke="#888" /><path d="M3 9.500h10M3 12.500h10" stroke="#666" strokeDasharray="1.500 1" /><path d="M4 7q0-3 5-3 4 0 5-3" stroke="#ccc" fill="none" /></Tray>
        <Tray label="帮助"><circle cx="8" cy="7" r="7" fill="#1a24a8" stroke="#a8b4e8" /><path d="M5.500 5.500q0-2.500 2.500-2.500t2.500 2.300Q10.500 7 8 7.500v1.500M8 10.300v1.700" stroke="#fff" strokeWidth="1.700" fill="none" /></Tray>
        <Tray label="还原"><path d="M6 0.500h5v4H6zM3.500 2.500h5v3h-5z" fill="#1a4a82" stroke="#fff" /><path d="M4 12h6l-3 3z" fill="#fff" /></Tray>
        <Tray label="同步"><path d="M0 0h16v16H0z" fill="#1f7cd8" /><path d="M1 8h3q0 5 5 4 3-1 2-8M8 6l3-3 3 3" stroke="#fff" strokeWidth="2" fill="none" /></Tray>
        <Tray label="安全"><path d="M1 2q7-2 14 0v6q-1 6-7 8Q2 14 1 8z" fill="#eaf3fc" stroke="#3a7cd0" /><path d="M4 5q4-2 8 0v2l-4 4-4-4z" stroke="#2a6cd0" strokeWidth="1.800" fill="none" /></Tray>
        <Tray label="图片"><path d="M0 0h16v16H0z" fill="#f3ead8" /><path d="M2 3h5M9 3h5M2 6h5M9 6h5M2 10h5M2 13h5" stroke="#d0783c" strokeWidth="2" strokeDasharray="1.500 1" /><path d="M8 8h5l-1 2 3 3-2 2-3-3-2 1z" fill="#28a040" /></Tray>
        <Tray label="欧特克"><path d="M0 15L10 3v5l-5 6z" fill="#e02020" /><path d="M9 6l7 9-7-4z" fill="#30c040" /></Tray>
        <Tray label="商店"><path d="M1 1h6v6H1z" fill="#f4801c" /><path d="M8 1h7v7H8z" fill="#34d424" /><path d="M1 8h7v7H1z" fill="#28b4f4" /><path d="M9 9h6v6H9z" fill="#fcc814" /></Tray>
        <Tray label="输入法"><path d="M0 0h16v16H0z" fill="#8c1c8c" /><path d="M4.500 5.500Q5 2.500 8 2.500t3 3-6 7.500h7" stroke="#fff" strokeWidth="2.400" fill="none" /></Tray>
        <Tray label="Creo"><path d="M1 12Q3 3 9 2q5 2 6 9-5 5-10 3 2-4 1-6-2 1-5 4z" fill="#a8c8ec" /><path d="M6 7q5-2 8 4-3 4-8 3 2-4 0-7z" fill="#2858a8" /></Tray>
        <Tray label="盾牌"><path d="M1 3l7-2 7 3-3 8-4 4-5-5z" fill="#f0a020" /><path d="M8 1l7 3-3 8-4-5z" fill="#78a828" /><path d="M8 7l-5 4 5 5 3-5z" fill="#c84820" /></Tray>
        <Tray label="显示"><path d="M0 0h16v16H0z" fill="#58b4ec" /><path d="M2 2h6v8H2zM9 2l4 6M13 2L9 8M4 14h10v-4" stroke="#fff" fill="none" strokeWidth="1.300" /><path d="M4 4h3M4 7h3" stroke="#173f74" /></Tray>
        <Tray label="操作中心"><path d="M2.500 1v14" stroke="#fff" strokeWidth="1.500" /><path d="M4 2h8v6H4z" fill="#fff" /><circle cx="11" cy="11" r="4.500" fill="#d82020" /><path d="M9 9l4 4M13 9l-4 4" stroke="#fff" strokeWidth="1.500" /></Tray>
        <Tray label="网络"><path d="M5.500 4.500h9v7h-9zM8 14.500h5M10 12v3M1.500 1v4h4V1M3.500 5v8" stroke="#fff" strokeWidth="1.300" fill="none" /></Tray>
        <Tray label="音量"><path d="M2 6h3l4-4v12l-4-4H2z" fill="#fff" /><path d="M11 5q2 3 0 6M13 3q3 5 0 10" stroke="#fff" fill="none" /></Tray>
        <time className="flex w-[76px] flex-col text-center font-['Open_Sans',sans-serif] text-xs leading-[17px] text-white">
          <span>15:58</span>
          <span>2016/7/19</span>
        </time>
        <button aria-label="显示桌面" className="mr-[2px] h-[38px] w-[14px] border border-[#6f93b8] bg-linear-to-br from-[#6a8fb8] to-[#1c4478]" />
      </div>
    </footer>
  );
}

function Rate({ value, color, up }: { value: string; color: string; up?: boolean }) {
  return (
    <div className="flex items-center font-['Open_Sans',sans-serif] text-xs text-white">
      <svg viewBox="0 0 8 8" className="mr-2 h-2 w-2" fill="none" stroke={color} strokeWidth="1.800">
        <path d={up ? "M4 8V1M1 4l3-3 3 3" : "M4 0v7M1 4l3 3 3-3"} />
      </svg>
      {value}
      <span className="text-[10px] text-[#a4a8b0]">K/s</span>
    </div>
  );
}

function DarkMeter() {
  return (
    <div className="absolute bottom-[78px] left-1/2 ml-[159px] flex items-center">
      <div className="relative z-10 flex h-[60px] w-[60px] items-center justify-center rounded-full bg-[#3a4560] font-['Open_Sans',sans-serif] font-light text-white shadow-[0_0_3px_#1c2436]">
        <svg viewBox="0 0 60 60" className="absolute inset-0 h-full w-full" fill="none" strokeWidth="2">
          <path d="M30 4a26 26 0 0 1 20 43" stroke="#40c8b4" />
          <path d="M50 47a26 26 0 0 1-46-15" stroke="#e8d8a0" />
        </svg>
        <span className="text-[25px] leading-none">74</span>
        <span className="pt-3 text-[10px]">%</span>
      </div>
      <div className="-ml-5 flex h-[42px] w-20 flex-col justify-between rounded-r-full bg-[#20283a] pt-1 pl-[22px]">
        <Rate value="0.9" color="#40a8f0" up />
        <Rate value="0.9" color="#40c860" />
      </div>
    </div>
  );
}

function OrangeMeter() {
  return (
    <div className="absolute right-[33px] bottom-[40px] flex items-center">
      <div className="-mr-5 flex h-[44px] w-20 flex-col justify-between rounded-l-full bg-[linear-gradient(#2c3c58_0,#2c3c58_40%,#565f70_45%)] pt-[5px] pb-[3px] pl-[9px]">
        <Rate value="1.0" color="#ff9c10" up />
        <Rate value="1.0" color="#2090e0" />
      </div>
      <div className="z-10 flex h-[60px] w-[60px] items-center justify-center rounded-full bg-[linear-gradient(#2f405c_0,#2f405c_23%,#ff9408_23%)] font-['Open_Sans',sans-serif] font-light text-white">
        <span className="text-[28px] leading-none">74</span>
        <span className="pt-3 text-xs">%</span>
      </div>
    </div>
  );
}

function Banner() {
  return (
    <div className="absolute bottom-0 left-1/2 h-[100px] w-[500px] -translate-x-1/2 overflow-hidden bg-white/80 shadow-[3px_4px_5px_rgba(0,0,0,.6)]">
      <div className="flex h-[80px] items-end justify-center pr-5 pb-4 font-['Noto_Sans','Noto_Sans_CJK_SC',sans-serif] leading-none text-[#3d8c80]">
        <span className="pr-4 text-[26px] font-medium">来</span>
        <span className="pr-2 text-[26px] font-medium">自</span>
        <span className="text-[34px]">Eric</span>
        <span className="pr-1 text-[29px]">：</span>
        <span className="text-[29px]">245868159</span>
      </div>
      <p className="pl-[152px] font-['Liberation_Serif',serif] text-[21px] leading-6 font-bold text-[#ee7078]">BBS.CHINADE.NET</p>
    </div>
  );
}

export default function App() {
  return (
    <div className={`h-screen bg-white pt-[10px] pr-[11px] pb-[11px] pl-[10px] ${cjk}`}>
      <main className="relative flex h-full flex-col bg-[#fcfcfc] shadow-[3px_4px_7px_rgba(0,0,0,.6)]">
        <div className="flex min-h-0 flex-1">
          <div className="flex min-w-0 flex-1 flex-col border-r-4 border-[#c9cdd0]">
            <Ribbon />
            <div className="flex min-h-0 flex-1 bg-[#fcfcfc] pr-1">
              <ModelTreePanel />
              <div className="relative min-w-0 flex-1 bg-linear-to-b from-[#c5dceb] to-[#5c7ba9]">
                <ModelDrawing />
                <ViewToolbar />
              </div>
            </div>
            <StatusBar />
          </div>
          <div className="flex w-[148px] shrink-0 flex-col">
            <div className="mr-1 h-[11px] border-r border-b border-[#c0c7cc] bg-[#eff0f1]" />
            <div className="mr-[5px] flex-1 bg-linear-to-b from-[#c5dceb] to-[#5c7ba9]" />
            <div className="flex h-[33px] items-center justify-end border-t-2 border-[#95989c] bg-[#edeff0] pr-[18px]">
              <StatusSelect label="过滤器" value="" className="h-[18px] w-24" />
            </div>
          </div>
        </div>
        <Taskbar />
        <ColorScale />
        <CurvatureDialog />
        <DarkMeter />
        <OrangeMeter />
        <Banner />
      </main>
    </div>
  );
}
